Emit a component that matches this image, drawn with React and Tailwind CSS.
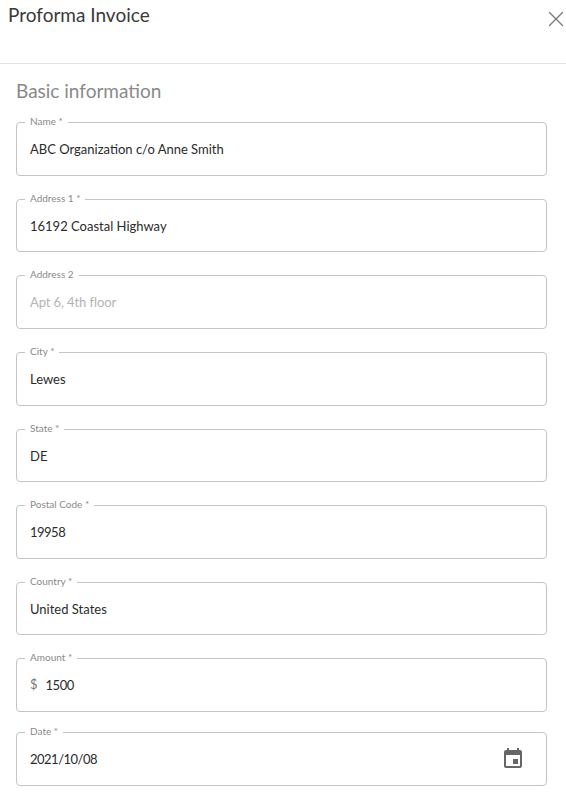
import { X } from 'lucide-react'

const fields = [
  { label: 'Name *', value: 'ABC Organization c/o Anne Smith', top: 'mt-0', h: 'h-[54px]' },
  { label: 'Address 1 *', value: '16192 Coastal Highway', top: 'mt-[23px]', h: 'h-[53px]' },
  { label: 'Address 2', placeholder: 'Apt 6, 4th floor', top: 'mt-[23px]', h: 'h-[54px]' },
  { label: 'City *', value: 'Lewes', top: 'mt-[23px]', h: 'h-[54px]' },
  { label: 'State *', value: 'DE', top: 'mt-[23px]', h: 'h-[53px]' },
  { label: 'Postal Code *', value: '19958', numeric: true, top: 'mt-[23px]', h: 'h-[54px]' },
  { label: 'Country *', value: 'United States', top: 'mt-[23px]', h: 'h-[53px]' },
  { label: 'Amount *', value: '1500', numeric: true, prefix: '$', top: 'mt-[23px]', h: 'h-[54px]' },
  { label: 'Date *', value: '2021/10/08', numeric: true, date: true, top: 'mt-[20px]', h: 'h-[54px]' },
]

const CalendarIcon = () => (
  <svg className="w-[24px] h-[24px] text-[#666666]" viewBox="0 0 24 24" fill="currentColor">
    <path d="M17 12h-5v5h5v-5zM16 1v2H8V1H6v2H5c-1.11 0-1.99.9-1.99 2L3 19c0 1.1.89 2 2 2h14c1.1 0 2-.9 2-2V5c0-1.1-.9-2-2-2h-1V1h-2zm3 18H5V8h14v11z" />
  </svg>
)

const Field = ({ label, value, placeholder, prefix, numeric, date, top, h }) => (
  <div className={`relative ${top} ${h} border border-[#c4c4c4] rounded-[4px] flex items-center pl-[13px] pr-[21px]`}>
    <span className="absolute left-[8px] -top-[9px] px-[5px] bg-white text-[10px] leading-[14px] text-[#8a8a8a]">{label}</span>
    {prefix && <span className="text-[#777777] text-[13px] mr-[8px]">{prefix}</span>}
    <span className={`text-[13px] leading-[20px] ${numeric ? 'tracking-[-0.5px]' : ''} ${placeholder ? 'text-[#b4b4b4] tracking-[-0.1px]' : 'text-[#2b2b2b]'}`}>{value || placeholder}</span>
    {date && <span className="ml-auto flex"><CalendarIcon /></span>}
  </div>
)

export default function App() {
  return (
    <div className="w-[566px] h-[793px] overflow-hidden bg-white font-['Lato','Noto_Sans',sans-serif]">
      <div className="h-[64px] border-b border-[#e2e2e2] flex justify-between pl-[8px]">
        <h1 className="text-[19px] leading-[30px] text-[#3a3a3a]">Proforma Invoice</h1>
        <X className="w-[26px] h-[26px] mt-[6px] -mr-[3px] text-[#777777]" strokeWidth={1.2} />
      </div>
      <div className="px-[16px] pr-[19px]">
        <h2 className="text-[19px] leading-[28px] text-[#8a8a8a] mt-[13px] mb-[17px]">Basic information</h2>
        {fields.map((f) => (
          <Field key={f.label} {...f} />
        ))}
      </div>
    </div>
  )
}
